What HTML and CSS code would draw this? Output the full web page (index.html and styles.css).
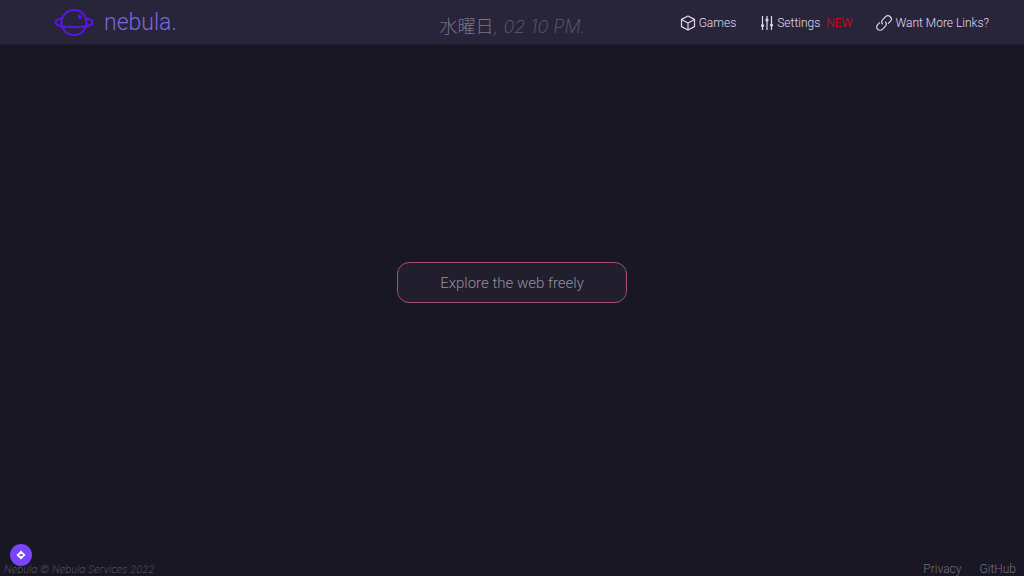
FILE: index.html
```html
<!DOCTYPE html>
<html lang="en">
<head>
<meta charset="utf-8">
<meta name="viewport" content="width=device-width, initial-scale=1">
<title>nebula.</title>
<link rel="stylesheet" href="styles.css">
</head>
<body>
<header class="navbar">
  <a class="brand" href="#">
    <svg class="brand-logo" viewBox="0 0 40 28" aria-hidden="true">
      <circle cx="20" cy="13.5" r="12.5"/>
      <path d="M8.500 9.300C4.500 9.900 1.500 11.400 1.500 13.500c0 3 8.200 4.700 18.500 4.700s18.500-1.700 18.500-4.700c0-2.100-3-3.600-7-4.200"/>
      <ellipse class="brand-crater" cx="25.800" cy="7.800" rx="1.700" ry="2.300" transform="rotate(-38 25.800 7.800)"/>
    </svg>
    <span>nebula.</span>
  </a>
  <time class="clock"><span class="day" lang="ja">水曜日</span><i class="hour">, 02 10 PM.</i></time>
  <nav class="links">
    <a href="#"><svg class="icon" viewBox="0 0 16 16" aria-hidden="true"><path d="M8 1l6.500 3.400v7.200L8 15l-6.500-3.400V4.400zM1.500 4.400L8 8l6.500-3.600M8 8v7"/></svg>Games</a>
    <a href="#"><svg class="icon icon-sliders" viewBox="0 0 14 16" aria-hidden="true"><path d="M2.500 1v14M7 1v14M11.500 1v14"/><circle cx="2.500" cy="10.500" r="1.600"/><circle cx="7" cy="5" r="1.600"/><circle cx="11.500" cy="10" r="1.600"/></svg>Settings<span class="new">NEW</span></a>
    <a href="#"><svg class="icon" viewBox="0 0 16 16" aria-hidden="true"><path d="M6.700 9.300a3.300 3.300 0 0 1 0-4.700l2.900-2.900a3.300 3.300 0 0 1 4.700 4.700l-2.200 2.200M9.300 6.700a3.300 3.300 0 0 1 0 4.700l-2.900 2.900a3.300 3.300 0 0 1-4.700-4.700l2.200-2.200"/></svg>Want More Links?</a>
  </nav>
</header>
<main class="content">
  <form class="search"><input class="search-box" type="text" placeholder="Explore the web freely" aria-label="Explore the web freely"></form>
</main>
<footer class="footer">
  <p class="copyright">Nebula © Nebula Services 2022</p>
  <nav class="legal"><a href="#">Privacy</a><a href="#">GitHub</a></nav>
  <button class="badge" type="button" aria-label="Directions">
    <svg viewBox="0 0 12 12" aria-hidden="true"><path fill="#fff" fill-rule="evenodd" d="M6 1.500L10.500 6 6 10.500 1.500 6zM4.500 5.200v1.800h3L8 6 6.800 4.600v.6z"/></svg>
  </button>
</footer>
</body>
</html>
```
FILE: styles.css
```css
* {
  box-sizing: border-box;
}

body {
  margin: 0;
  min-height: 100vh;
  display: flex;
  flex-direction: column;
  background: #191724;
  color: #e0def4;
  font-family: Roboto, "Noto Sans CJK JP", sans-serif;
  font-weight: 300;
}

a {
  color: inherit;
  text-decoration: none;
}

.navbar {
  display: grid;
  grid-template-columns: 1fr auto 1fr;
  align-items: center;
  height: 45px;
  padding: 0 35px 0 54px;
  background: #28243a;
  border-bottom: 1px solid #1f1b2d;
}

.brand {
  display: flex;
  align-items: center;
  gap: 10px;
  color: #7967dd;
  font-size: 23px;
  line-height: 44px;
}

.brand-logo {
  width: 40px;
  height: 28px;
  fill: none;
  stroke: #5817e8;
  stroke-width: 2;
  overflow: visible;
}

.brand-logo .brand-crater {
  fill: #5817e8;
  stroke: none;
}

.clock {
  padding-top: 7px;
  margin-right: 18px;
  font-size: 18px;
  line-height: 36px;
  color: #625e74;
  white-space: nowrap;
}

.day {
  font-family: "Noto Sans CJK JP", sans-serif;
  color: #77738a;
}

.hour {
  font-family: Inter, sans-serif;
  font-weight: 200;
}

.links {
  display: flex;
  justify-content: flex-end;
  gap: 24px;
  font-size: 12px;
  color: #e0dcf0;
  white-space: nowrap;
}

.links a {
  display: flex;
  align-items: center;
  gap: 3px;
}

.icon {
  width: 16px;
  height: 16px;
  fill: none;
  stroke: #e0d5ed;
  stroke-width: 1.2;
  stroke-linejoin: round;
  overflow: visible;
}

.icon-sliders {
  width: 14px;
}

.icon circle {
  fill: #e0d5ed;
  stroke: none;
}

.new {
  margin-left: 3px;
  color: #e6040e;
}

.content {
  flex: 1;
  display: flex;
  align-items: center;
  justify-content: center;
  padding-bottom: 42px;
}

.search-box {
  width: 230px;
  height: 41px;
  padding: 0 12px;
  border: 1px solid #a94f73;
  border-radius: 12px;
  background: #211e2e;
  color: #e0def4;
  font: 300 15px Roboto, sans-serif;
  text-align: center;
  outline: none;
}

.search-box::placeholder {
  color: #94919c;
  opacity: 1;
}

.footer {
  position: relative;
  display: flex;
  justify-content: space-between;
  align-items: flex-end;
  height: 14px;
  padding: 0 8px 0 4px;
}

.copyright {
  margin: 0;
  font: italic 200 10px/14px Inter, sans-serif;
  color: #64616f;
}

.legal {
  display: flex;
  gap: 18px;
  font-size: 12px;
  line-height: 14px;
  color: #716e7d;
}

.badge {
  position: absolute;
  left: 10px;
  bottom: 10px;
  display: grid;
  place-items: center;
  width: 22px;
  height: 22px;
  padding: 0;
  border: 0;
  border-radius: 50%;
  background: #7945fa;
}

.badge svg {
  width: 12px;
  height: 12px;
}
```
